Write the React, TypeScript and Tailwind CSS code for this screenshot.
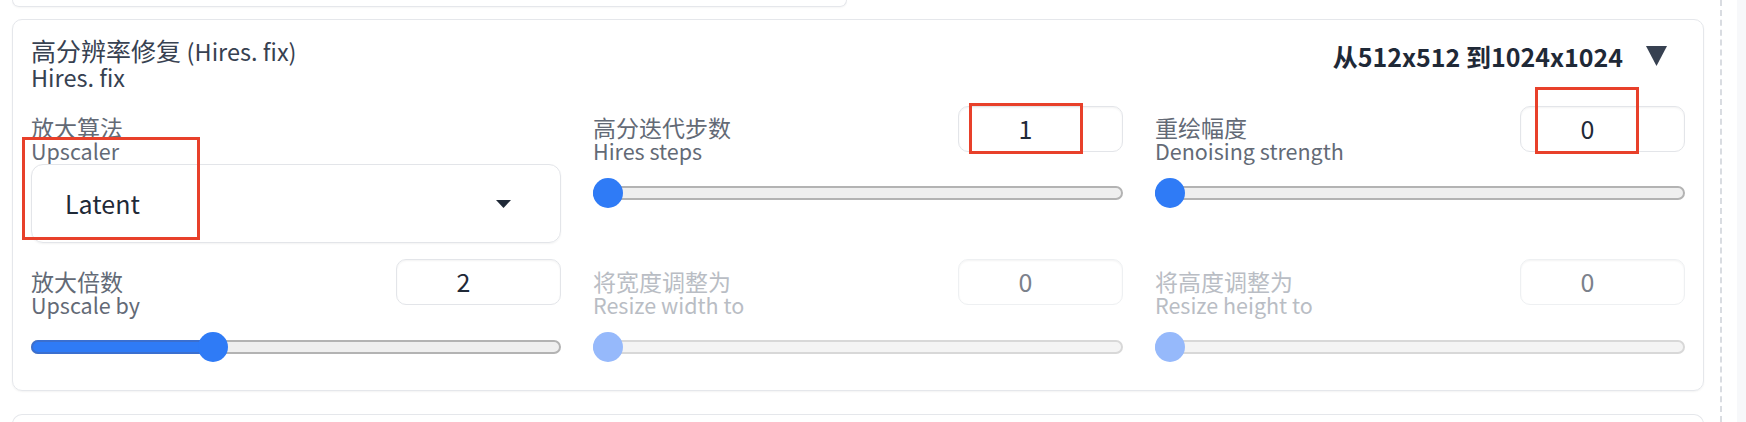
import React from "react";

type Field = {
  zh: string;
  en: string;
  value: string;
  pct: number;
  disabled?: boolean;
};

const topRow: Field[] = [
  { zh: "高分迭代步数", en: "Hires steps", value: "1", pct: 0 },
  { zh: "重绘幅度", en: "Denoising strength", value: "0", pct: 0 },
];

const bottomRow: Field[] = [
  { zh: "放大倍数", en: "Upscale by", value: "2", pct: 1 / 3 },
  { zh: "将宽度调整为", en: "Resize width to", value: "0", pct: 0, disabled: true },
  { zh: "将高度调整为", en: "Resize height to", value: "0", pct: 0, disabled: true },
];

function Label({ zh, en, disabled }: { zh: string; en: string; disabled?: boolean }) {
  return (
    <div
      className={
        "flex flex-col leading-[23px] " +
        (disabled ? "text-[#b9bdc4]" : "text-[#636a76]")
      }
    >
      <span className="text-[23px]">{zh}</span>
      <span className="text-[21.5px]">{en}</span>
    </div>
  );
}

function Slider({ pct, disabled }: { pct: number; disabled?: boolean }) {
  return (
    <div className="relative flex h-[30px] items-center">
      <div
        className={
          "h-[14px] w-full rounded-full border-2 " +
          (disabled ? "border-[#d8d8d8] bg-[#f4f4f4]" : "border-[#b3b3b3] bg-[#efefef]")
        }
      />
      <div
        className={
          "absolute left-0 top-[8px] h-[14px] rounded-l-full border-2 border-r-0 " +
          (disabled ? "border-[#a9c3f5] bg-[#96b9fb]" : "border-[#3b6fcf] bg-[#2f7bf6]")
        }
        style={{ width: `calc(${pct} * (100% - 30px) + 15px)` }}
      />
      <div
        className={
          "absolute top-0 h-[30px] w-[30px] rounded-full " +
          (disabled ? "bg-[#96b9fb]" : "bg-[#2f7bf6]")
        }
        style={{ left: `calc(${pct} * (100% - 30px))` }}
      />
    </div>
  );
}

function NumberBox({ value, disabled }: { value: string; disabled?: boolean }) {
  return (
    <div
      className={
        "flex h-[46px] w-[165px] shrink-0 items-center justify-center rounded-[10px] border pr-[30px] text-[25px] shadow-[inset_0_1px_2px_rgba(0,0,0,0.05)] " +
        (disabled ? "border-[#eef0f2] text-[#7b818b]" : "border-[#e3e5e9] text-[#1f2937]")
      }
    >
      {value}
    </div>
  );
}

function SliderField({ f, pt }: { f: Field; pt: string }) {
  return (
    <div className="flex flex-col">
      <div className="flex items-start justify-between">
        <div className={pt}>
          <Label zh={f.zh} en={f.en} disabled={f.disabled} />
        </div>
        <NumberBox value={f.value} disabled={f.disabled} />
      </div>
      <div className="mt-[16px]">
        <Slider pct={f.pct} disabled={f.disabled} />
      </div>
    </div>
  );
}

export default function App() {
  return (
    <div className="relative flex h-[422px] w-[1746px] overflow-hidden bg-white font-['Noto_Sans_CJK_SC','Noto_Sans',sans-serif]">
      <div className="flex w-[1720px] shrink-0 flex-col pl-[12px] pr-[16px]">
        <div className="h-[7px] w-[835px] shrink-0 rounded-b-[10px] border border-t-0 border-[#e5e7eb] shadow-[0_1px_2px_rgba(0,0,0,0.04)]" />

        <div className="mt-[12px] rounded-[10px] border border-[#e5e7eb] px-[18px] pb-[28px] pt-[17px] shadow-[0_1px_2px_rgba(0,0,0,0.05)]">
          <div className="flex items-start justify-between">
            <div className="flex flex-col leading-[26px] text-[#374151]">
              <span className="text-[25px]">
                高分辨率修复 <span className="text-[23.5px]">(Hires. fix)</span>
              </span>
              <span className="text-[23.5px]">Hires. fix</span>
            </div>
            <div className="mr-[18px] mt-[4px] flex items-center gap-[23px]">
              <span className="text-[25px] font-bold leading-[30px] text-[#1f2937]">
                从512x512 到1024x1024
              </span>
              <svg width="21" height="20" viewBox="0 0 21 20">
                <polygon points="0,0 21,0 10.5,20" fill="#374151" />
              </svg>
            </div>
          </div>

          <div className="mt-[16px] grid grid-cols-3 gap-x-[32px]">
            <div className="flex flex-col pt-[9.5px]">
              <Label zh="放大算法" en="Upscaler" />
              <div className="mt-[2.5px] flex h-[79px] items-center justify-between rounded-[12px] border border-[#e3e5e9] pl-[33px] pr-[49px] shadow-[0_1px_2px_rgba(0,0,0,0.05)]">
                <span className="text-[25px] text-[#1f2937]">Latent</span>
                <svg width="15" height="8" viewBox="0 0 15 8">
                  <polygon points="0,0 15,0 7.5,8" fill="#1f2937" />
                </svg>
              </div>
            </div>
            {topRow.map((f) => (
              <SliderField key={f.en} f={f} pt="pt-[9.5px]" />
            ))}
          </div>

          <div className="mt-[16px] grid grid-cols-3 gap-x-[32px]">
            {bottomRow.map((f) => (
              <SliderField key={f.en} f={f} pt="pt-[11px]" />
            ))}
          </div>
        </div>

        <div className="mt-[23px] h-[40px] shrink-0 rounded-t-[10px] border border-b-0 border-[#e5e7eb]" />
      </div>

      <div className="h-full border-l-2 border-dashed border-[#d9dce1]" />
      <div className="ml-[15px] h-full flex-1 bg-[#f7f8fa]" />

      <div className="absolute left-[22px] top-[137px] h-[103px] w-[178px] border-[3px] border-[#e8402a]" />
      <div className="absolute left-[969px] top-[103px] h-[51px] w-[114px] border-[3px] border-[#e8402a]" />
      <div className="absolute left-[1535px] top-[87px] h-[67px] w-[104px] border-[3px] border-[#e8402a]" />
    </div>
  );
}
